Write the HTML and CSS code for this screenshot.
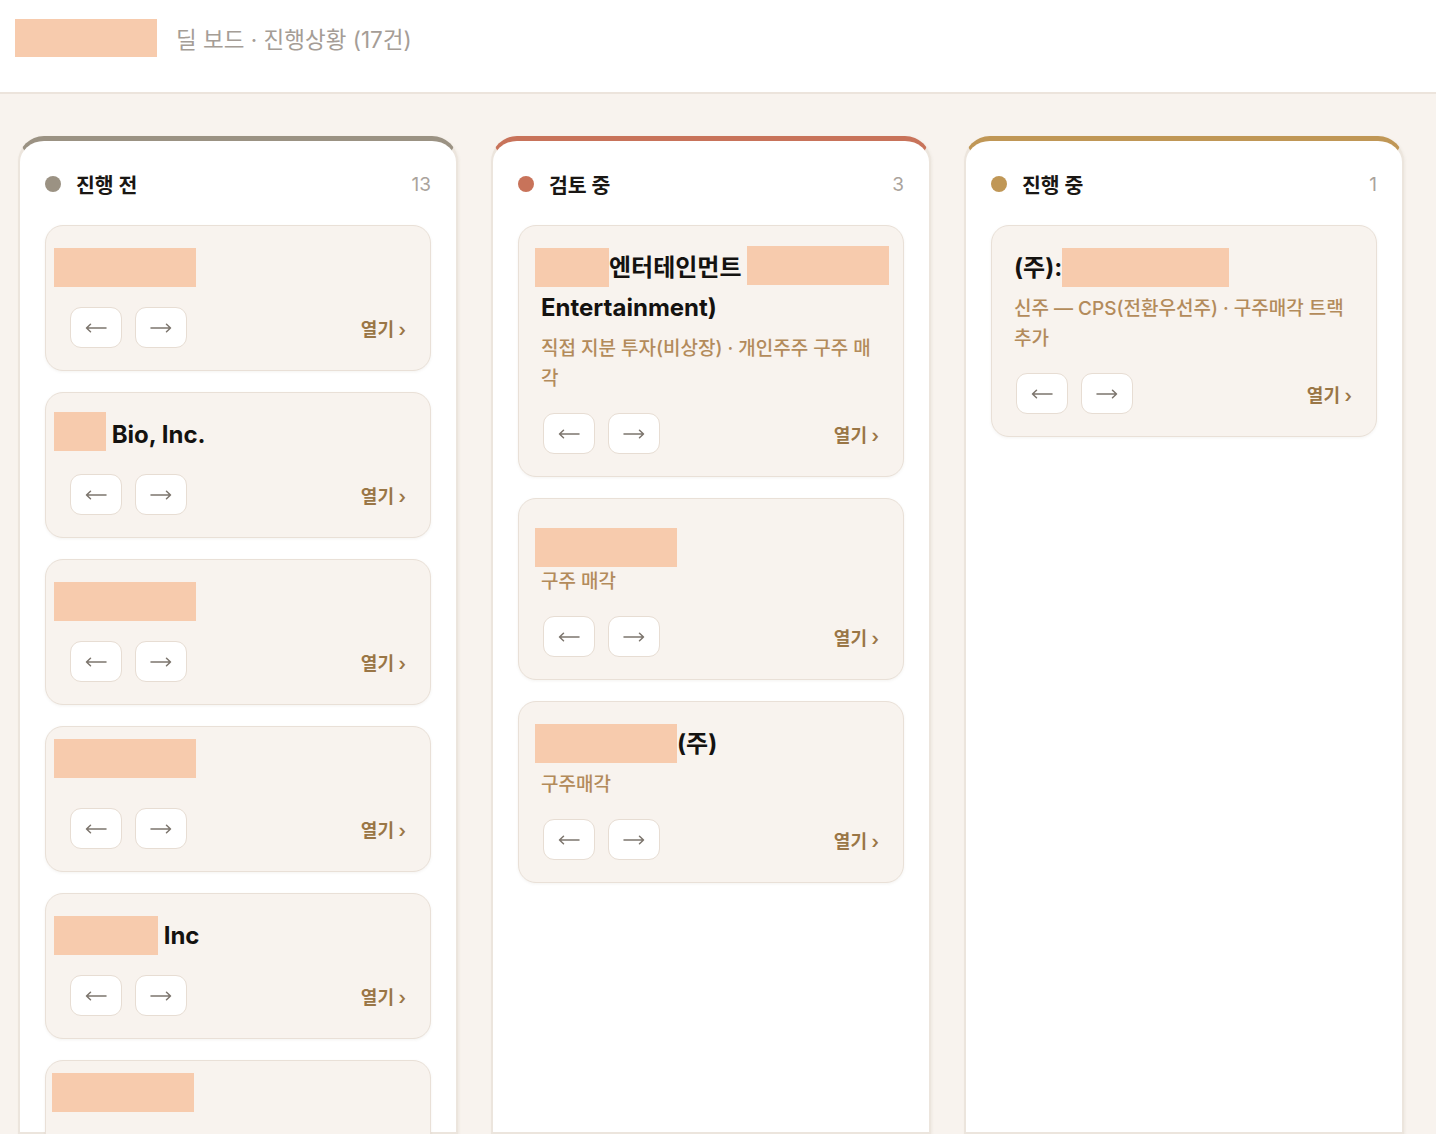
FILE: index.html
```html
<!DOCTYPE html>
<html lang="ko">
<head>
<meta charset="utf-8">
<title>딜 보드</title>
<link rel="stylesheet" href="styles.css">
</head>
<body>
<header class="topbar">
  <span class="brand-redact"></span>
  <span class="topbar-title">딜 보드 · 진행상황 (17건)</span>
</header>
<main class="board">
  <section class="column col-gray">
    <div class="col-head">
      <span class="dot"></span><span class="col-name">진행 전</span><span class="col-count">13</span>
    </div>
    <div class="cards">
      <article class="card">
        <div class="card-title"><span class="redact w142 ml14"></span></div>
        <div class="card-actions">
          <button class="arrow-btn"><svg viewBox="0 0 22 12" width="22" height="12"><path d="M21 6H1.5M5.5 2.2L1.5 6l4 3.8"/></svg></button>
          <button class="arrow-btn"><svg viewBox="0 0 22 12" width="22" height="12"><path d="M1 6h19.5M16.5 2.2l4 3.8-4 3.8"/></svg></button>
          <a class="open-link">열기 ›</a>
        </div>
      </article>
      <article class="card">
        <div class="card-title"><span class="redact w52 ml14 up3"></span> Bio, Inc.</div>
        <div class="card-actions">
          <button class="arrow-btn"><svg viewBox="0 0 22 12" width="22" height="12"><path d="M21 6H1.5M5.5 2.2L1.5 6l4 3.8"/></svg></button>
          <button class="arrow-btn"><svg viewBox="0 0 22 12" width="22" height="12"><path d="M1 6h19.5M16.5 2.2l4 3.8-4 3.8"/></svg></button>
          <a class="open-link">열기 ›</a>
        </div>
      </article>
      <article class="card">
        <div class="card-title"><span class="redact w142 ml14"></span></div>
        <div class="card-actions">
          <button class="arrow-btn"><svg viewBox="0 0 22 12" width="22" height="12"><path d="M21 6H1.5M5.5 2.2L1.5 6l4 3.8"/></svg></button>
          <button class="arrow-btn"><svg viewBox="0 0 22 12" width="22" height="12"><path d="M1 6h19.5M16.5 2.2l4 3.8-4 3.8"/></svg></button>
          <a class="open-link">열기 ›</a>
        </div>
      </article>
      <article class="card">
        <div class="card-title"><span class="redact w142 ml14 up"></span></div>
        <div class="card-actions">
          <button class="arrow-btn"><svg viewBox="0 0 22 12" width="22" height="12"><path d="M21 6H1.5M5.5 2.2L1.5 6l4 3.8"/></svg></button>
          <button class="arrow-btn"><svg viewBox="0 0 22 12" width="22" height="12"><path d="M1 6h19.5M16.5 2.2l4 3.8-4 3.8"/></svg></button>
          <a class="open-link">열기 ›</a>
        </div>
      </article>
      <article class="card">
        <div class="card-title"><span class="redact w104 ml14"></span> Inc</div>
        <div class="card-actions">
          <button class="arrow-btn"><svg viewBox="0 0 22 12" width="22" height="12"><path d="M21 6H1.5M5.5 2.2L1.5 6l4 3.8"/></svg></button>
          <button class="arrow-btn"><svg viewBox="0 0 22 12" width="22" height="12"><path d="M1 6h19.5M16.5 2.2l4 3.8-4 3.8"/></svg></button>
          <a class="open-link">열기 ›</a>
        </div>
      </article>
      <article class="card">
        <div class="card-title"><span class="redact w142 ml16 up"></span></div>
        <div class="card-actions">
          <button class="arrow-btn"><svg viewBox="0 0 22 12" width="22" height="12"><path d="M21 6H1.5M5.5 2.2L1.5 6l4 3.8"/></svg></button>
          <button class="arrow-btn"><svg viewBox="0 0 22 12" width="22" height="12"><path d="M1 6h19.5M16.5 2.2l4 3.8-4 3.8"/></svg></button>
          <a class="open-link">열기 ›</a>
        </div>
      </article>
    </div>
  </section>

  <section class="column col-red">
    <div class="col-head">
      <span class="dot"></span><span class="col-name">검토 중</span><span class="col-count">3</span>
    </div>
    <div class="cards">
      <article class="card">
        <div class="card-title"><span class="nowrap"><span class="redact w74 ml6"></span>엔터테인먼트 <span class="redact w142 up2"></span></span><br>Entertainment)</div>
        <div class="card-sub">직접 지분 투자(비상장) · 개인주주 구주 매각</div>
        <div class="card-actions">
          <button class="arrow-btn"><svg viewBox="0 0 22 12" width="22" height="12"><path d="M21 6H1.5M5.5 2.2L1.5 6l4 3.8"/></svg></button>
          <button class="arrow-btn"><svg viewBox="0 0 22 12" width="22" height="12"><path d="M1 6h19.5M16.5 2.2l4 3.8-4 3.8"/></svg></button>
          <a class="open-link">열기 ›</a>
        </div>
      </article>
      <article class="card">
        <div class="card-title"><span class="redact w142 ml6 down"></span></div>
        <div class="card-sub">구주 매각</div>
        <div class="card-actions">
          <button class="arrow-btn"><svg viewBox="0 0 22 12" width="22" height="12"><path d="M21 6H1.5M5.5 2.2L1.5 6l4 3.8"/></svg></button>
          <button class="arrow-btn"><svg viewBox="0 0 22 12" width="22" height="12"><path d="M1 6h19.5M16.5 2.2l4 3.8-4 3.8"/></svg></button>
          <a class="open-link">열기 ›</a>
        </div>
      </article>
      <article class="card">
        <div class="card-title"><span class="redact w142 ml6"></span>(주)</div>
        <div class="card-sub">구주매각</div>
        <div class="card-actions">
          <button class="arrow-btn"><svg viewBox="0 0 22 12" width="22" height="12"><path d="M21 6H1.5M5.5 2.2L1.5 6l4 3.8"/></svg></button>
          <button class="arrow-btn"><svg viewBox="0 0 22 12" width="22" height="12"><path d="M1 6h19.5M16.5 2.2l4 3.8-4 3.8"/></svg></button>
          <a class="open-link">열기 ›</a>
        </div>
      </article>
    </div>
  </section>

  <section class="column col-gold">
    <div class="col-head">
      <span class="dot"></span><span class="col-name">진행 중</span><span class="col-count">1</span>
    </div>
    <div class="cards">
      <article class="card">
        <div class="card-title">(주):<span class="redact w167"></span></div>
        <div class="card-sub">신주 — CPS(전환우선주) · 구주매각 트랙 추가</div>
        <div class="card-actions">
          <button class="arrow-btn"><svg viewBox="0 0 22 12" width="22" height="12"><path d="M21 6H1.5M5.5 2.2L1.5 6l4 3.8"/></svg></button>
          <button class="arrow-btn"><svg viewBox="0 0 22 12" width="22" height="12"><path d="M1 6h19.5M16.5 2.2l4 3.8-4 3.8"/></svg></button>
          <a class="open-link">열기 ›</a>
        </div>
      </article>
    </div>
  </section>
</main>
</body>
</html>
```

FILE: styles.css
```css
* { box-sizing: border-box; }

html, body {
  margin: 0;
  padding: 0;
  height: 100%;
}

body {
  font-family: Inter, "Noto Sans CJK KR", "Noto Sans", sans-serif;
  background: #f8f3ee;
  color: #1a1714;
  overflow: hidden;
}

.topbar {
  display: flex;
  align-items: center;
  gap: 19px;
  height: 94px;
  padding: 0 15px 16px;
  background: #ffffff;
  border-bottom: 2px solid #ece4dc;
}

.brand-redact {
  display: inline-block;
  width: 142px;
  height: 38px;
  background: #f7cbad;
}

.topbar-title {
  font-size: 22.5px;
  color: #a59d96;
}

.board {
  display: flex;
  align-items: stretch;
  gap: 33px;
  padding: 42px 0 0 18px;
  height: calc(100% - 94px);
  overflow: hidden;
}

.column {
  flex: 0 0 440px;
  width: 440px;
  min-width: 0;
  background: #ffffff;
  border: 2px solid #ece5dd;
  border-top: 5px solid #9b9283;
  border-radius: 26px 26px 0 0;
  padding: 28px 25px 0;
  box-shadow: 1px 1px 3px rgba(120, 100, 80, 0.08);
}

.col-gray { border-top-color: #9b9283; }
.col-red { border-top-color: #c8735a; }
.col-gold { border-top-color: #c09756; }

.col-head {
  display: flex;
  align-items: center;
  height: 30px;
  margin-bottom: 26px;
}

.dot {
  width: 16px;
  height: 16px;
  border-radius: 50%;
  background: #9b9283;
  margin-right: 15px;
}

.col-red .dot { background: #c8735a; }
.col-gold .dot { background: #c09756; }

.col-name {
  font-size: 20.5px;
  font-weight: 700;
  color: #1a1714;
}

.col-count {
  margin-left: auto;
  font-size: 19px;
  color: #aaa39c;
}

.cards {
  display: flex;
  flex-direction: column;
  gap: 21px;
  min-width: 0;
}

.card {
  min-width: 0;
  background: #f8f3ee;
  border: 1.5px solid #e9e0d7;
  border-radius: 18px;
  padding: 22px 24px 22px 22px;
  box-shadow: 0 1px 3px rgba(120, 100, 80, 0.08);
}

.card-title {
  font-size: 24px;
  font-weight: 700;
  line-height: 40px;
  color: #141210;
}

.nowrap { white-space: nowrap; }

.redact {
  display: inline-block;
  height: 39px;
  vertical-align: top;
  background: #f7cbad;
}

.w52 { width: 52px; }
.w74 { width: 74px; }
.w104 { width: 104px; }
.w142 { width: 142px; }
.w167 { width: 167px; }
.ml6 { margin-left: -6px; }
.ml14 { margin-left: -14px; }
.ml16 { margin-left: -16px; }
.up { margin-top: -10px; }
.up2 { margin-top: -2px; }
.up3 { margin-top: -3px; }
.down { margin-top: 7px; margin-bottom: -7px; }

.card-sub {
  margin-top: 6px;
  font-size: 19px;
  line-height: 30px;
  font-weight: 500;
  color: #b38b5b;
}

.card-actions {
  display: flex;
  align-items: center;
  gap: 13px;
  margin-top: 19px;
  padding-left: 2px;
}

.arrow-btn {
  display: flex;
  align-items: center;
  justify-content: center;
  width: 52px;
  height: 41px;
  padding: 0;
  background: #ffffff;
  border: 1.5px solid #e7ddd3;
  border-radius: 11px;
}

.arrow-btn svg {
  fill: none;
  stroke: #7c756d;
  stroke-width: 1.5;
  stroke-linecap: round;
  stroke-linejoin: round;
}

.open-link {
  margin-left: auto;
  font-size: 18px;
  font-weight: 600;
  color: #9a7646;
}
```
